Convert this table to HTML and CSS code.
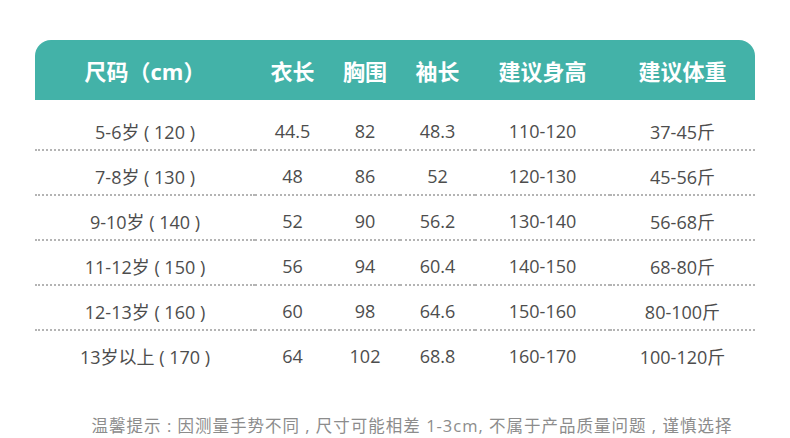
FILE: index.html
```html
<!DOCTYPE html>
<html lang="zh">
<head>
<meta charset="utf-8">
<link rel="stylesheet" href="styles.css">
</head>
<body>
<div class="page">
  <div class="table">
    <div class="row head">
      <div class="c c1">尺码（cm）</div>
      <div class="c">衣长</div>
      <div class="c">胸围</div>
      <div class="c">袖长</div>
      <div class="c">建议身高</div>
      <div class="c">建议体重</div>
    </div>
    <div class="row first">
      <div class="c c1">5-6岁 ( 120 )</div>
      <div class="c">44.5</div>
      <div class="c">82</div>
      <div class="c">48.3</div>
      <div class="c">110-120</div>
      <div class="c">37-45斤</div>
    </div>
    <div class="row">
      <div class="c c1">7-8岁 ( 130 )</div>
      <div class="c">48</div>
      <div class="c">86</div>
      <div class="c">52</div>
      <div class="c">120-130</div>
      <div class="c">45-56斤</div>
    </div>
    <div class="row">
      <div class="c c1">9-10岁 ( 140 )</div>
      <div class="c">52</div>
      <div class="c">90</div>
      <div class="c">56.2</div>
      <div class="c">130-140</div>
      <div class="c">56-68斤</div>
    </div>
    <div class="row">
      <div class="c c1">11-12岁 ( 150 )</div>
      <div class="c">56</div>
      <div class="c">94</div>
      <div class="c">60.4</div>
      <div class="c">140-150</div>
      <div class="c">68-80斤</div>
    </div>
    <div class="row">
      <div class="c c1">12-13岁 ( 160 )</div>
      <div class="c">60</div>
      <div class="c">98</div>
      <div class="c">64.6</div>
      <div class="c">150-160</div>
      <div class="c">80-100斤</div>
    </div>
    <div class="row last">
      <div class="c c1">13岁以上 ( 170 )</div>
      <div class="c">64</div>
      <div class="c">102</div>
      <div class="c">68.8</div>
      <div class="c">160-170</div>
      <div class="c">100-120斤</div>
    </div>
  </div>
  <p class="note">温馨提示 : 因测量手势不同 , 尺寸可能相差 1-3cm, 不属于产品质量问题 , 谨慎选择</p>
</div>
</body>
</html>
```

FILE: styles.css
```css
* { box-sizing: border-box; }
html, body { margin: 0; padding: 0; background: #fff; }
body {
  width: 790px;
  height: 438px;
  overflow: hidden;
  font-family: "Open Sans", "Noto Sans CJK SC", sans-serif;
}
.page {
  padding: 40px 35px 0 35px;
}
.table {
  width: 720px;
}
.row {
  display: grid;
  grid-template-columns: 220px 75px 70px 75px 135px 145px;
  height: 45px;
  align-items: center;
  color: #4d4d4d;
  font-size: 18px;
  font-weight: 400;
}
.row .c {
  text-align: center;
  height: 100%;
  display: flex;
  align-items: center;
  justify-content: center;
  padding-top: 7px;
  border-bottom: 2px dotted #b4b4b4;
  white-space: nowrap;
}
.row.head {
  height: 60px;
  background: #43b2a8;
  border-radius: 16px 16px 0 0;
  color: #fff;
  font-size: 22px;
  font-weight: 700;
}
.row.head .c {
  border-bottom: none;
  padding-top: 0;
}
.row.first {
  height: 51px;
}
.row.first .c {
  padding-top: 13px;
}
.row.last .c {
  border-bottom: none;
  padding-top: 5px;
}
.note {
  margin: 40px 0 0 34px;
  text-align: center;
  font-size: 16.5px;
  line-height: 20px;
  color: #8c8c8c;
  letter-spacing: 1px;
  white-space: nowrap;
}
```
